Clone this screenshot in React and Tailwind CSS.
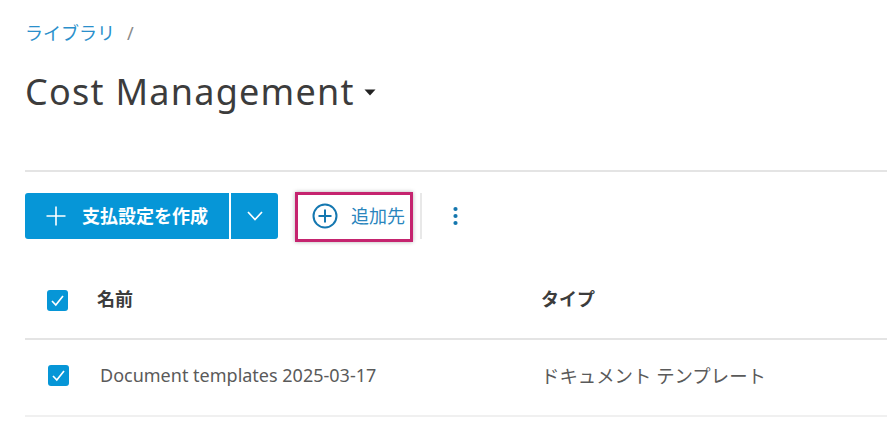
import React from "react";

const jp = "font-['Noto_Sans','Noto_Sans_CJK_JP',sans-serif]";

function Check({ className = "" }) {
  return (
    <span className={`flex h-[21px] w-[21px] items-center justify-center rounded-[3px] bg-[#0696d7] ${className}`}>
      <svg width="15" height="15" viewBox="0 0 15 15" fill="none" stroke="white" strokeWidth="1.7">
        <path d="M2 8 L5.8 12 L13 3" />
      </svg>
    </span>
  );
}

export default function App() {
  return (
    <div className={`h-[429px] w-[887px] overflow-hidden bg-white pl-[25px] ${jp}`}>
      <div className="mt-[21px] flex h-[24px] items-center gap-[12px] text-[18px] leading-[24px]">
        <span className="text-[#2a8fcb]">ライブラリ</span>
        <span className="text-[#8a8a8a]">/</span>
      </div>
      <div className="mt-[24px] flex h-[46px] items-center">
        <h1 className="text-[36px] leading-[46px] font-normal tracking-[1.25px] text-[#3c3c3c]">Cost Management</h1>
        <svg className="ml-[9px]" width="12" height="7" viewBox="0 0 12 7"><path d="M0.5 0.5 H11.5 L6 6.5 Z" fill="#222" /></svg>
      </div>
      <div className="mt-[55px] h-[2px] bg-[#e4e4e4]" />
      <div className="mt-[19px] flex h-[50px] items-center">
        <button className="flex h-[46px] w-[204px] items-center rounded-l-[3px] bg-[#0696d7] pl-[21px] text-white">
          <svg width="20" height="20" viewBox="0 0 20 20" stroke="white" strokeWidth="1.6"><path d="M10 0.5 V19.5 M0.5 10 H19.5" /></svg>
          <span className="ml-[16px] text-[18px] font-bold">支払設定を作成</span>
        </button>
        <button className="ml-[2px] flex h-[46px] w-[47px] items-center justify-center rounded-r-[3px] bg-[#0696d7]">
          <svg width="16" height="10" viewBox="0 0 16 10" fill="none" stroke="white" strokeWidth="1.7"><path d="M1 1 L8 8.5 L15 1" /></svg>
        </button>
        <button className="ml-[17px] mt-[2px] flex h-[50px] w-[118px] shrink-0 items-center border-[3px] border-[#c5246f] pl-[14px] shadow-[0_0_4px_rgba(0,0,0,0.3)]">
          <svg className="-mt-[2px]" width="26" height="26" viewBox="0 0 26 26" fill="none" stroke="#1477b0" strokeWidth="2"><circle cx="13" cy="13" r="11.5" /><path d="M13 6.5 V19.5 M6.5 13 H19.5" /></svg>
          <span className="ml-[13px] -mt-[2px] text-[18px] text-[#2a85bd]">追加先</span>
        </button>
        <div className="ml-[7px] h-[46px] w-[2px] bg-[#e8e8e8]" />
        <svg className="ml-[31px]" width="5" height="20" viewBox="0 0 5 20" fill="#1476ae"><circle cx="2.5" cy="3" r="2.1" /><circle cx="2.5" cy="10" r="2.1" /><circle cx="2.5" cy="17" r="2.1" /></svg>
      </div>
      <div className="mt-[25px] flex h-[74px] items-start border-b-2 border-[#e4e4e4] pt-[23px]">
        <Check className="ml-[22px] mt-[1px]" />
        <span className="ml-[29px] w-[444px] text-[18px] leading-[20px] font-bold text-[#3c3c3c]">名前</span>
        <span className="text-[18px] leading-[20px] font-bold text-[#3c3c3c]">タイプ</span>
      </div>
      <div className="flex h-[77px] items-center border-b-2 border-[#f0f0f0] pb-[4px]">
        <Check className="ml-[23px]" />
        <span className="ml-[31px] w-[441px] text-[18px] text-[#5a5a5a]">Document templates 2025-03-17</span>
        <span className="text-[18.4px] text-[#5a5a5a]">ドキュメント テンプレート</span>
      </div>
    </div>
  );
}
